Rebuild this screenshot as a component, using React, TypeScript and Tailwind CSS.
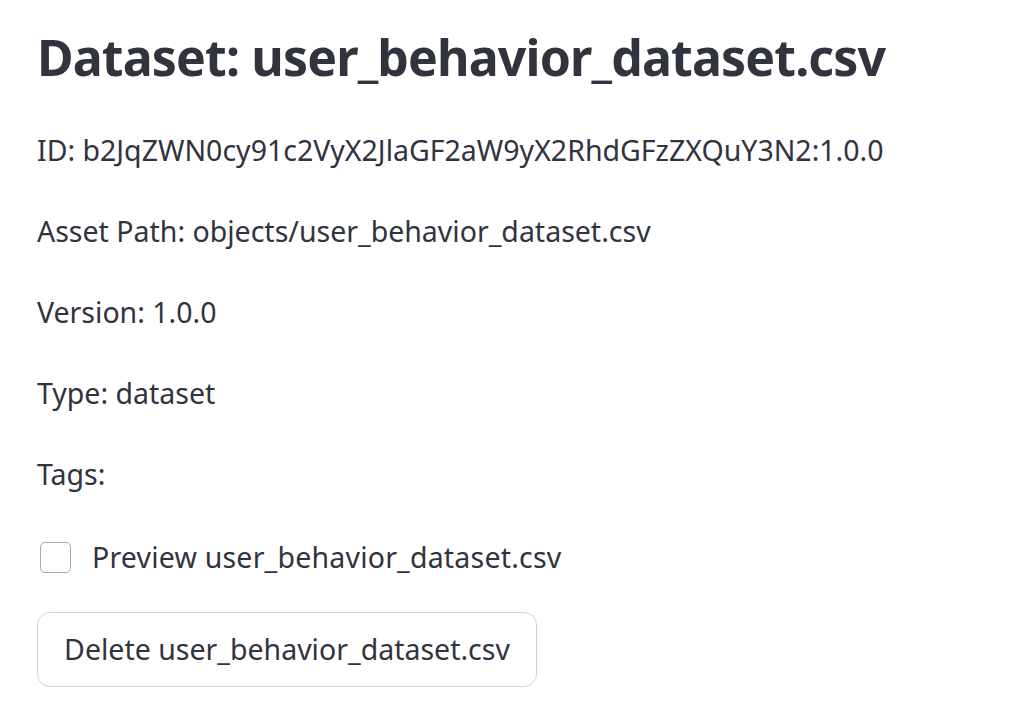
import React from "react";

export default function App() {
  const lines = [
    "ID: b2JqZWN0cy91c2VyX2JlaGF2aW9yX2RhdGFzZXQuY3N2:1.0.0",
    "Asset Path: objects/user_behavior_dataset.csv",
    "Version: 1.0.0",
    "Type: dataset",
    "Tags:",
  ];
  return (
    <div className="min-h-[714px] w-[1010px] bg-white text-[#31333f] font-['Noto_Sans',sans-serif] pl-[37px] pt-[23px]">
      <h1 className="m-0 text-[50px] leading-[68px] font-bold tracking-[-0.85px] whitespace-nowrap">
        <span>Dataset: user_behavior_dataset.csv</span>
      </h1>
      <div className="mt-[39px] flex flex-col gap-[41px]">
        {lines.map((l) => (
          <p key={l} className="m-0 h-[40px] text-[28.5px] leading-[40px] whitespace-nowrap">
            <span>{l}</span>
          </p>
        ))}
      </div>
      <label className="mt-[43px] flex h-[40px] items-center gap-[21px] pl-[3px]">
        <span className="block h-[31px] w-[31px] rounded-[5px] border-[1.5px] border-[#a3a8b8] bg-white" />
        <span className="text-[28.5px] leading-[40px] tracking-[0.2px] whitespace-nowrap">Preview user_behavior_dataset.csv</span>
      </label>
      <button className="mt-[35px] flex h-[75px] w-[500px] items-center justify-center rounded-[13px] border-[1.5px] border-[#d3d4d8] bg-white text-[28.5px] text-[#31333f]">
        <span>Delete user_behavior_dataset.csv</span>
      </button>
    </div>
  );
}
